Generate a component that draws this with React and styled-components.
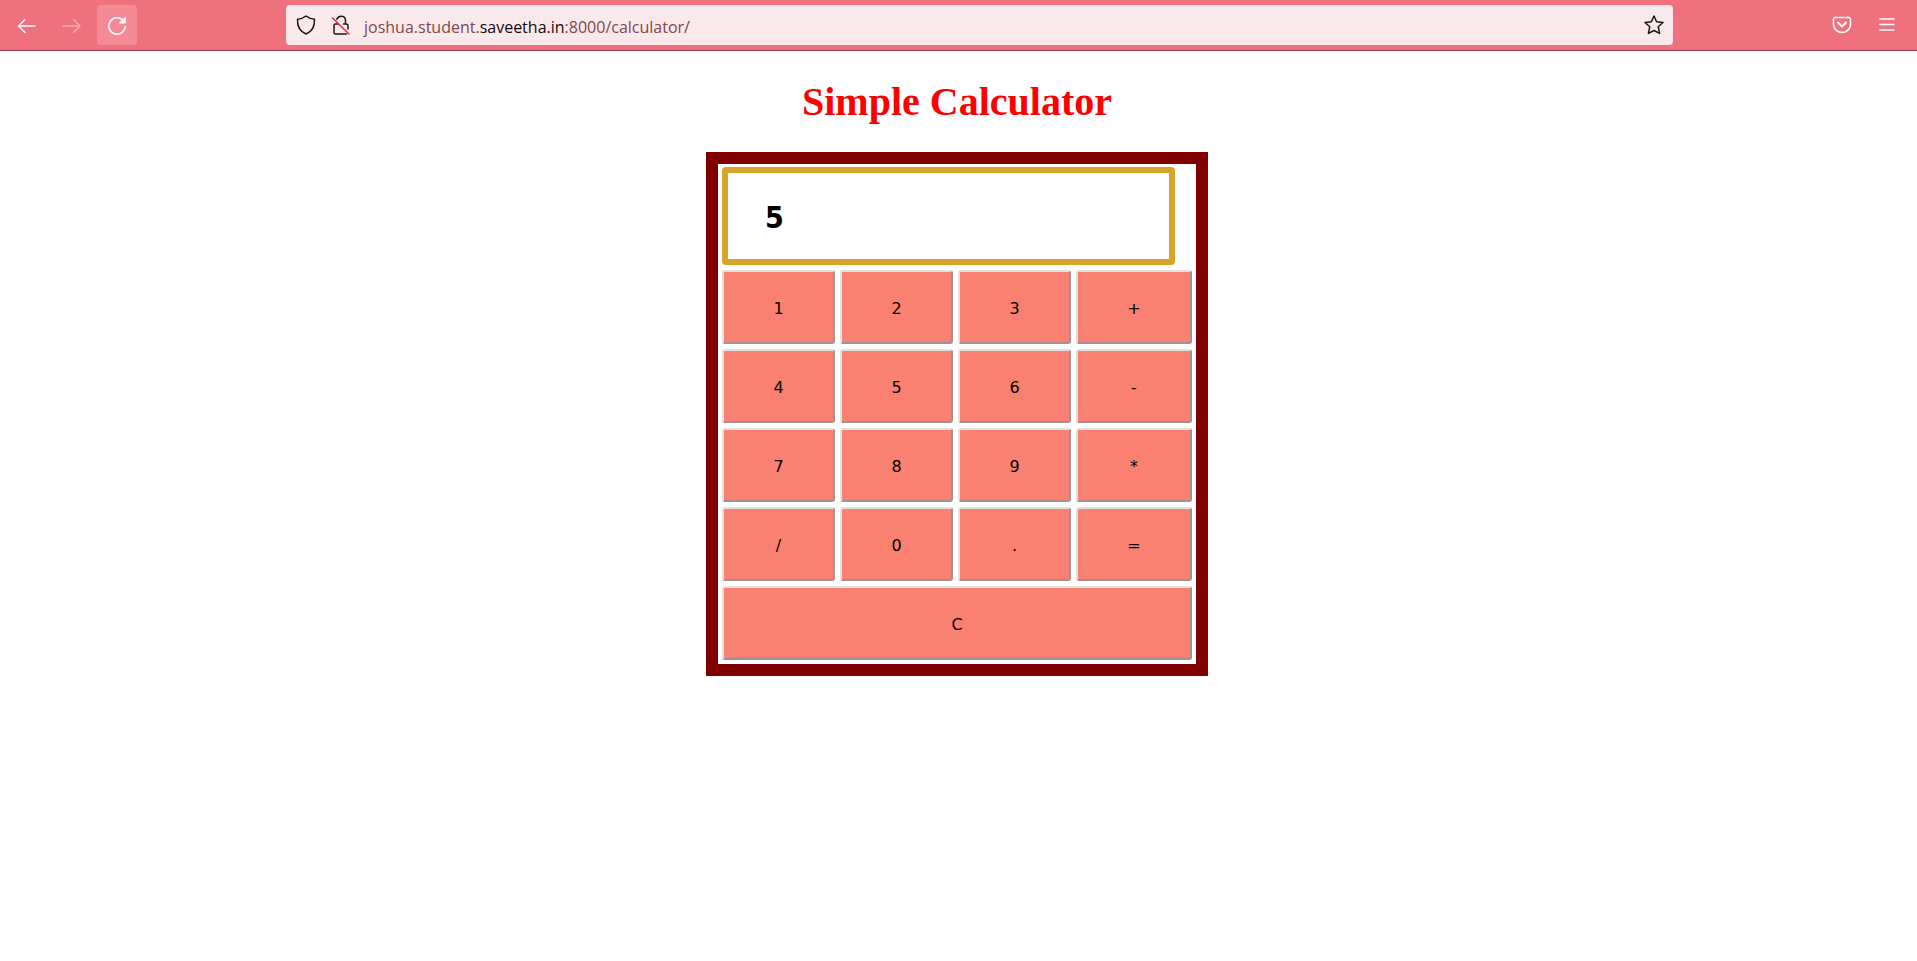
import React, { useState } from "react";
import styled, { createGlobalStyle } from "styled-components";

const GlobalStyle = createGlobalStyle`
  * { box-sizing: border-box; }
  body { margin: 0; background: #fff; }
`;

const Toolbar = styled.header`
  display: flex;
  align-items: center;
  height: 51px;
  padding: 0 10px 0 7px;
  background: #ef717e;
  border-bottom: 1px solid #96404f;
`;

const NavGroup = styled.nav`
  display: flex;
  gap: 5px;
  width: 279px;
  flex: none;
`;

const ToolButton = styled.button`
  display: flex;
  align-items: center;
  justify-content: center;
  flex: none;
  width: ${(p) => (p.$small ? 24 : 40)}px;
  height: 40px;
  padding: 0;
  border: 0;
  border-radius: 4px;
  color: ${(p) => p.$color || "#fff"};
  background: ${(p) => (p.$active ? "#f48a95" : "transparent")};
`;

const AddressBar = styled.div`
  display: flex;
  align-items: center;
  gap: 11px;
  flex: 1;
  height: 40px;
  padding: 0 7px 0 8px;
  border-radius: 4px;
  background: #fae9eb;
`;

const Address = styled.a`
  flex: 1;
  padding-top: 3px;
  color: #7d4850;
  font: 16px/24px "Open Sans", sans-serif;
  text-decoration: none;
`;

const Domain = styled.span`
  color: #15080a;
`;

const ToolGroup = styled.div`
  display: flex;
  justify-content: flex-end;
  gap: 5px;
  width: 234px;
  flex: none;
`;

const Page = styled.main`
  display: flex;
  flex-direction: column;
  align-items: center;
  padding: 28px 3px 0 0;
`;

const Title = styled.h1`
  margin: 0 0 27px;
  color: #f00;
  font: bold 40px/46px "Liberation Serif", serif;
`;

const Calculator = styled.form`
  width: 502px;
  max-width: 100%;
  padding: 3px 4px 4px;
  border: 12px solid #800000;
`;

const Display = styled.input`
  display: block;
  width: 453px;
  max-width: 100%;
  height: 98px;
  margin-bottom: 5px;
  padding: 2px 36px 0 37px;
  border: 6px solid #d9a529;
  border-radius: 4px;
  background: #fff;
  color: #000;
  font: bold 30px/36px "DejaVu Sans Condensed", "DejaVu Sans", sans-serif;
  outline: 0;
`;

const Keys = styled.div`
  display: grid;
  grid-template-columns: repeat(3, 113fr) 116fr;
  gap: 5px;
`;

const Key = styled.button`
  height: 74px;
  padding: 3px 0 0;
  grid-column: ${(p) => (p.$wide ? "1 / -1" : "auto")};
  border: 2px solid;
  border-color: #e3e0e0 #a39090 #a39090 #e3e0e0;
  border-radius: 3px;
  background: #fa8072;
  color: #000;
  font: 16px/20px "DejaVu Sans", sans-serif;
`;

const Icon = ({ size = 20, children }) => (
  <svg width={size} height={size} viewBox="0 0 20 20" fill="none" stroke="currentColor"
    strokeWidth="1.5" strokeLinecap="round" strokeLinejoin="round" aria-hidden="true">
    {children}
  </svg>
);

const keys = ["1", "2", "3", "+", "4", "5", "6", "-", "7", "8", "9", "*", "/", "0", ".", "=", "C"];

export default function App() {
  const [value, setValue] = useState("5");

  const press = (key) => {
    if (key === "C") return setValue("");
    if (key !== "=") return setValue(value + key);
    const parts = value.match(/^(-?[\d.]+)([-+*/])(-?[\d.]+)$/);
    if (!parts) return;
    const a = Number(parts[1]);
    const b = Number(parts[3]);
    setValue(String({ "+": a + b, "-": a - b, "*": a * b, "/": a / b }[parts[2]]));
  };

  return (
    <>
      <GlobalStyle />
      <Toolbar>
        <NavGroup aria-label="History">
          <ToolButton aria-label="Back">
            <Icon><path d="M18 11H1.500M8 4.500L1.500 11 8 17.500" /></Icon>
          </ToolButton>
          <ToolButton aria-label="Forward" $color="#f7abb4">
            <Icon><path d="M1 11h17M11.500 4.500L18 11l-6.500 6.500" /></Icon>
          </ToolButton>
          <ToolButton aria-label="Reload" $active>
            <Icon>
              <path d="M16.500 6A8.200 8.200 0 1 0 18.200 11.500" />
              <path d="M18.300 2.500v5.500h-5.500z" fill="currentColor" strokeWidth="1" />
            </Icon>
          </ToolButton>
        </NavGroup>
        <AddressBar>
          <ToolButton $small $color="#1c1517" aria-label="Tracking protection">
            <Icon><path d="M10 1C7.500 3 4.500 4 1.500 4.200 1.200 11.500 4 16.500 10 19 16 16.500 18.800 11.500 18.500 4.200 15.500 4 12.500 3 10 1z" /></Icon>
          </ToolButton>
          <ToolButton $small $color="#1c1517" aria-label="Connection not secure">
            <Icon>
              <path d="M5.800 4.200C7.500 .2 14.500-.2 14.500 5.500v3M7.500 9H4.500a1.500 1.500 0 0 0-1.500 1.500v7A1.500 1.500 0 0 0 4.500 19h11M12.500 9H15a2 2 0 0 1 2 2v3" />
              <path d="M1.500 3l16.500 16" stroke="#e22850" />
            </Icon>
          </ToolButton>
          <Address href="#calculator">
            joshua.student.<Domain>saveetha.in</Domain>:8000/calculator/
          </Address>
          <ToolButton $small $color="#1c1517" aria-label="Bookmark this page">
            <Icon><path d="M10 1l2.600 5.800 6.400.7-4.800 4.200 1.400 6.700L10 15.500l-5.600 2.900 1.400-6.700L1 7.500l6.400-.7z" /></Icon>
          </ToolButton>
        </AddressBar>
        <ToolGroup>
          <ToolButton aria-label="Save to Pocket">
            <Icon>
              <path d="M3 2.500h14A1.700 1.700 0 0 1 18.500 4v5.500a8.500 8 0 0 1-17 0V4A1.700 1.700 0 0 1 3 2.500z" />
              <path d="M6 7.500l4 4 4-4" strokeWidth="2" />
            </Icon>
          </ToolButton>
          <ToolButton aria-label="Open menu">
            <Icon><path d="M3 4h14M3 9.500h14M3 15h14" /></Icon>
          </ToolButton>
        </ToolGroup>
      </Toolbar>
      <Page id="calculator">
        <Title>Simple Calculator</Title>
        <Calculator onSubmit={(e) => e.preventDefault()}>
          <Display aria-label="Result" value={value} onChange={(e) => setValue(e.target.value)} />
          <Keys>
            {keys.map((key) => (
              <Key key={key} type="button" $wide={key === "C"} onClick={() => press(key)}>{key}</Key>
            ))}
          </Keys>
        </Calculator>
      </Page>
    </>
  );
}
